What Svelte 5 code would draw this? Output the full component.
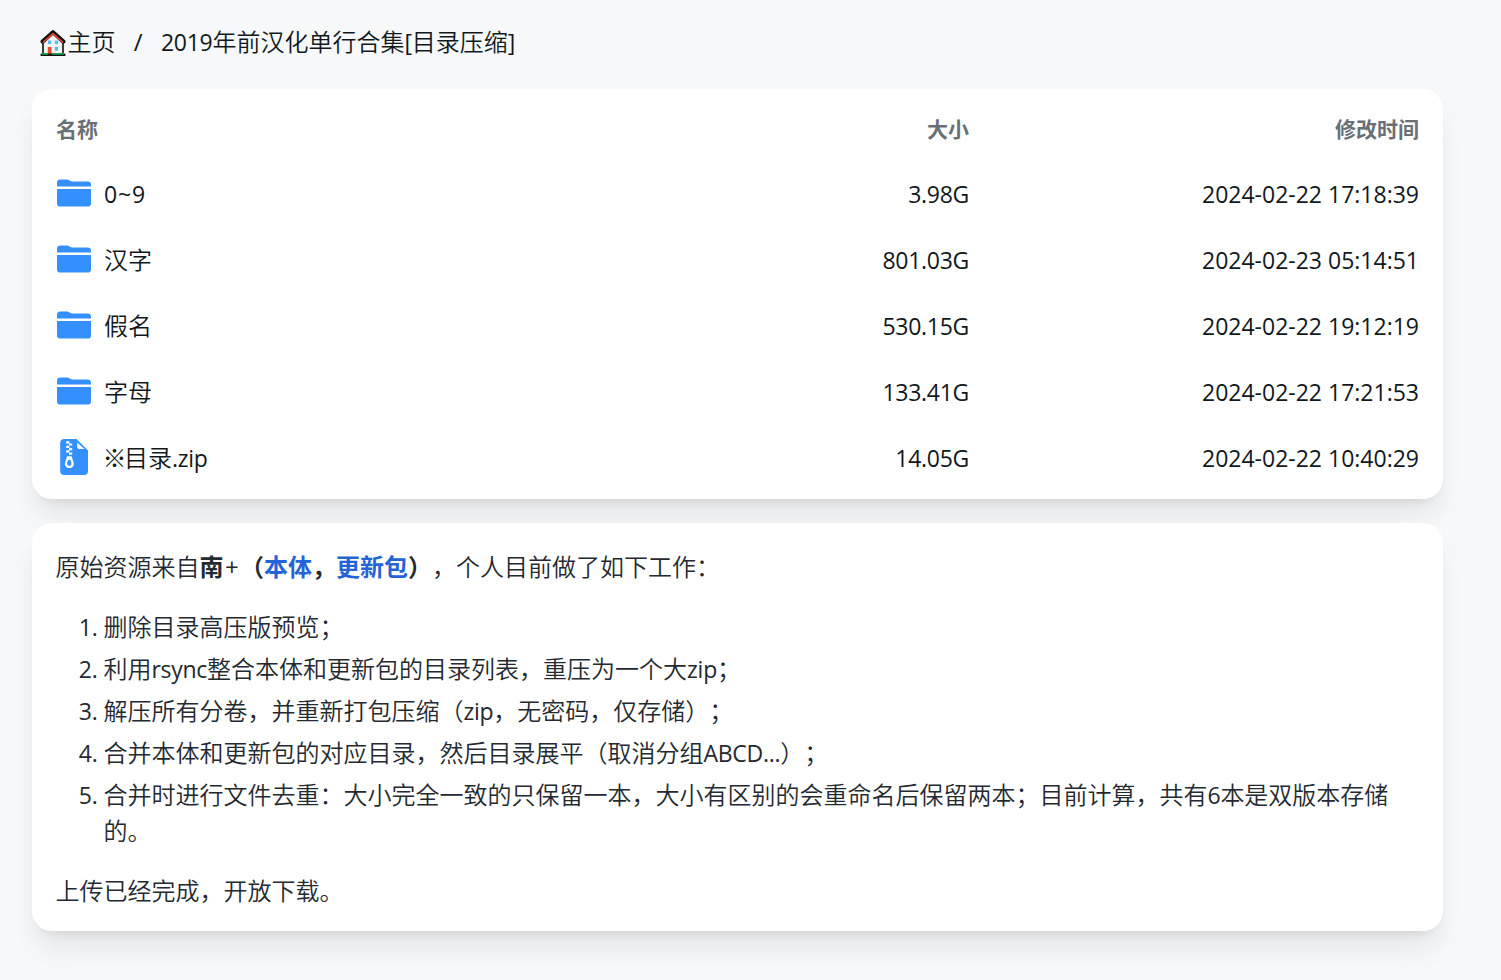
<script>
  const rows = [
    { name: '0~9', size: '3.98G', time: '2024-02-22 17:18:39' },
    { name: '汉字', size: '801.03G', time: '2024-02-23 05:14:51' },
    { name: '假名', size: '530.15G', time: '2024-02-22 19:12:19' },
    { name: '字母', size: '133.41G', time: '2024-02-22 17:21:53' },
    { name: '※目录.zip', size: '14.05G', time: '2024-02-22 10:40:29', zip: true },
  ];
  const notes = [
    '删除目录高压版预览；',
    '利用rsync整合本体和更新包的目录列表，重压为一个大zip；',
    '解压所有分卷，并重新打包压缩（zip，无密码，仅存储）；',
    '合并本体和更新包的对应目录，然后目录展平（取消分组ABCD...）；',
    '合并时进行文件去重：大小完全一致的只保留一本，大小有区别的会重命名后保留两本；目前计算，共有6本是双版本存储的。',
  ];
  // Splits a string into Latin, reference-mark and CJK runs so that each gets its own tracking.
  const runs = (s) => s.match(/[\x20-\x7e]+|※|[^\x20-\x7e※]+/g);
</script>

{#snippet mixed(s)}{#each runs(s) as r}{#if r === '※'}<span class="mark">{r}</span>{:else if /^[\x20-\x7e]/.test(r)}<span class="lat">{r}</span>{:else}{r}{/if}{/each}{/snippet}

<main>
  <nav>
    <a class="home" href="#top">
      <svg width="26" height="28" viewBox="0 0 26 28">
        <path d="M3 13.5 13 3.5l10 10V26H3z" fill="#f4f4f4" stroke="#111" stroke-width="1.6" />
        <path d="M2.6 12.6 13 3.2 23.4 12.6" fill="none" stroke="#111" stroke-width="4.2" stroke-linecap="round" stroke-linejoin="round" />
        <path d="M3.4 13.2 13 4.6 22.6 13.2" fill="none" stroke="#e74835" stroke-width="1.6" stroke-linecap="round" stroke-linejoin="round" />
        <path d="M8 11.6h3.2v3.4H8zM14.8 11.6H18V15h-3.2zM14.8 18H18v3.8h-3.2z" fill="#4cc2f1" />
        <path d="M7.8 18h3.8v7H7.8z" fill="#e74835" />
        <path d="M.6 24.6h24.8V27H.6z" fill="#111" />
        <path d="M2 24h6v1.8H2zM12 24h12v1.8H12z" fill="#16a34a" />
      </svg><span>主页</span></a>
    <span class="sep">/</span>
    <span>{@render mixed('2019年前汉化单行合集[目录压缩]')}</span>
  </nav>

  <section class="card files">
    <div class="row head"><span>名称</span><span>大小</span><span>修改时间</span></div>
    {#each rows as row}
      <div class="row">
        <span class="name">
          {#if row.zip}
            <svg width="36" height="36" viewBox="0 0 36 36">
              <path d="M8.2 0H20.5L32 11.5V32a4 4 0 0 1-4 4H8.2a4 4 0 0 1-4-4V4a4 4 0 0 1 4-4z" fill="#3490ff" />
              <path d="M21.2 3.6v4a2.5 2.5 0 0 0 2.5 2.5h4.6z" fill="#fff" />
              <path d="M10.2 2.2h3.2v2.2h-3.2zM13 4.4h3.2v2.2H13zM10.2 6.7h3.2v2.2h-3.2zM13 9h3.2v2.2H13zM10.2 11.3h3.2v2.2h-3.2zM13 13.6h3.2v2.2H13z" fill="#fff" />
              <path d="M11 17.2h4.6l2 6.2c.9 2.9-1.2 5.7-4.2 5.7s-5.2-2.8-4.3-5.7zM13.3 20.8c-1.5 0-2.1 2.2-2.1 3.6s.8 2.4 2.1 2.4 2.1-1 2.1-2.4-.6-3.6-2.1-3.6z" fill="#fff" fill-rule="evenodd" />
            </svg>
          {:else}
            <svg width="36" height="36" viewBox="0 -1 36 36">
              <path d="M1 10.6V6.8a3.4 3.4 0 0 1 3.4-3.4h6.2c1.3 0 2.2.5 3.2 1.2.8.6 1.5.9 2.7.9h15.1A3.4 3.4 0 0 1 35 8.9v1.7z" fill="#3490ff" />
              <path d="M1 13h34v14.2a3.4 3.4 0 0 1-3.4 3.4H4.4A3.4 3.4 0 0 1 1 27.2z" fill="#3490ff" />
            </svg>
          {/if}
          <span class:digits={row.name === '0~9'}>{@render mixed(row.name)}</span>
        </span>
        <span class="lat">{row.size}</span>
        <span class="lat time">{row.time}</span>
      </div>
    {/each}
  </section>

  <section class="card readme">
    <p>原始资源来自<b>南</b><span class="plus">+</span><b>（<a href="#base">本体</a>，<a href="#update">更新包</a>）</b>，个人目前做了如下工作：</p>
    <ol>
      {#each notes as note, i}
        <li><span class="num lat">{i + 1}.</span><span>{@render mixed(note)}</span></li>
      {/each}
    </ol>
    <p>上传已经完成，开放下载。</p>
  </section>
</main>

<style>
  :global(body) { margin: 0; background: #f7f8fa; }
  main {
    box-sizing: border-box;
    height: 980px;
    padding: 18px 58px 0 32px;
    background: #f7f8fa;
    color: #11181c;
    font: 350 24px/48px 'Open Sans', 'Noto Sans CJK SC', sans-serif;
    text-spacing-trim: space-all;
    overflow: hidden;
  }
  a { color: inherit; text-decoration: none; }
  .lat { font-size: 23px; font-weight: 400; letter-spacing: -0.28px; }
  .time { letter-spacing: 0; }
  .digits .lat { letter-spacing: 0.9px; }
  .mark { margin: 0 -2.5px 0 -1.5px; }
  nav { display: flex; height: 71px; padding-left: 8px; white-space: nowrap; }
  .home { display: flex; align-items: flex-start; gap: 1.5px; }
  .home svg { display: block; margin-top: 11px; }
  .sep { width: 45.5px; text-align: center; font-weight: 400; }
  .card {
    box-sizing: border-box;
    background: #fff;
    border-radius: 20px;
    box-shadow: 0 20px 30px -6px rgb(0 0 0 / 0.09), 0 8px 12px -8px rgb(0 0 0 / 0.12);
  }
  .files { height: 410px; padding: 8px 24px 0; margin-bottom: 24px; }
  .row {
    display: grid;
    grid-template-columns: 609px 304px 450px;
    height: 66px;
    line-height: 64px;
  }
  .row > :nth-child(n + 2) { text-align: right; }
  .head { height: 65px; color: #687076; font-size: 21px; font-weight: 700; }
  .name { display: flex; gap: 12px; }
  .name svg { display: block; margin-top: 13px; }
  .readme { height: 408px; padding: 25.5px 24px 0 23.5px; color: #24292f; line-height: 36px; }
  p { margin: 0; }
  b { font-weight: 700; }
  b a { color: #2563d9; }
  .plus { display: inline-block; width: 16.5px; text-align: center; font-weight: 400; }
  ol { margin: 24px 0; padding: 0; list-style: none; }
  li { display: grid; grid-template-columns: 42px 1fr; gap: 6px; }
  li + li { margin-top: 6px; }
  .num { text-align: right; }
</style>
